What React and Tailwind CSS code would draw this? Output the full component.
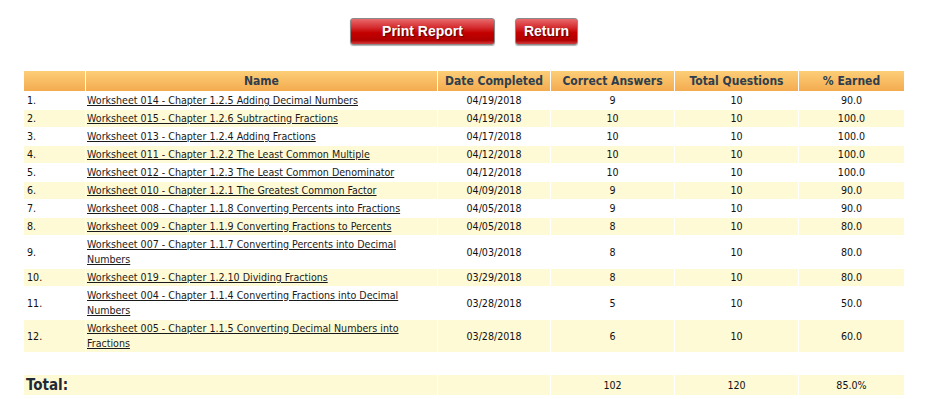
import React from "react";

const rows = [
  ["Worksheet 014 - Chapter 1.2.5 Adding Decimal Numbers", "04/19/2018", "9", "10", "90.0"],
  ["Worksheet 015 - Chapter 1.2.6 Subtracting Fractions", "04/19/2018", "10", "10", "100.0"],
  ["Worksheet 013 - Chapter 1.2.4 Adding Fractions", "04/17/2018", "10", "10", "100.0"],
  ["Worksheet 011 - Chapter 1.2.2 The Least Common Multiple", "04/12/2018", "10", "10", "100.0"],
  ["Worksheet 012 - Chapter 1.2.3 The Least Common Denominator", "04/12/2018", "10", "10", "100.0"],
  ["Worksheet 010 - Chapter 1.2.1 The Greatest Common Factor", "04/09/2018", "9", "10", "90.0"],
  ["Worksheet 008 - Chapter 1.1.8 Converting Percents into Fractions", "04/05/2018", "9", "10", "90.0"],
  ["Worksheet 009 - Chapter 1.1.9 Converting Fractions to Percents", "04/05/2018", "8", "10", "80.0"],
  ["Worksheet 007 - Chapter 1.1.7 Converting Percents into Decimal Numbers", "04/03/2018", "8", "10", "80.0"],
  ["Worksheet 019 - Chapter 1.2.10 Dividing Fractions", "03/29/2018", "8", "10", "80.0"],
  ["Worksheet 004 - Chapter 1.1.4 Converting Fractions into Decimal Numbers", "03/28/2018", "5", "10", "50.0"],
  ["Worksheet 005 - Chapter 1.1.5 Converting Decimal Numbers into Fractions", "03/28/2018", "6", "10", "60.0"],
];

function RedButton({ children, w }) {
  return (
    <button
      className={`h-[27px] ${w} rounded-[3px] border border-[#8a8a8a] bg-[linear-gradient(to_bottom,#e86a6c_0%,#d42a2d_35%,#c40000_55%,#b00000_85%,#d63c3c_100%)] text-[14px] font-bold text-white [text-shadow:1px_1px_1px_#5a0000] shadow-[0_1px_1px_rgba(0,0,0,0.3)]`}
      style={{ fontFamily: '"Liberation Sans", Arial, sans-serif' }}
    >
      {children}
    </button>
  );
}

export default function App() {
  const th = "bg-[linear-gradient(to_bottom,#fcce78,#f4ab4f)] text-[#2f3e4e] font-bold text-[12px] leading-[16px] py-[2px] text-center";
  return (
    <div
      className="w-[925px] h-[399px] bg-white text-[#111] overflow-hidden"
      style={{ fontFamily: '"DejaVu Sans Condensed", "DejaVu Sans", sans-serif' }}
    >
      <div className="ml-[23px] w-[882px] pt-[18px]">
        <div className="flex justify-center gap-[20px]">
          <RedButton w="w-[145px]">Print Report</RedButton>
          <RedButton w="w-[63px]">Return</RedButton>
        </div>
        <table className="mt-[25px] w-[882px] table-fixed border-separate border-spacing-[1px] text-[10.6px] leading-[15px]">
          <colgroup>
            <col className="w-[61px]" />
            <col className="w-[351px]" />
            <col className="w-[112px]" />
            <col className="w-[123px]" />
            <col className="w-[123px]" />
            <col className="w-[105px]" />
          </colgroup>
          <thead>
            <tr>
              <th className={th}></th>
              <th className={th}>Name</th>
              <th className={th}>Date Completed</th>
              <th className={th}>Correct Answers</th>
              <th className={th}>Total Questions</th>
              <th className={th}>% Earned</th>
            </tr>
          </thead>
          <tbody>
            {rows.map((r, i) => (
              <tr key={i} className={i % 2 === 1 ? "bg-[#fffad6]" : "bg-white"}>
                <td className="py-[1px] pl-[3px] align-middle">{i + 1}.</td>
                <td className="py-[1px] pl-[1px] pr-[2px] align-middle">
                  <a href="#" className="underline text-[#1a1a1a]">{r[0]}</a>
                </td>
                <td className="py-[1px] text-center align-middle">{r[1]}</td>
                <td className="py-[1px] text-center align-middle">{r[2]}</td>
                <td className="py-[1px] text-center align-middle">{r[3]}</td>
                <td className="py-[1px] text-center align-middle">{r[4]}</td>
              </tr>
            ))}
            <tr>
              <td colSpan={6} className="h-[21px]"></td>
            </tr>
            <tr className="bg-[#fffad6]">
              <td colSpan={2} className="h-[20px] pl-[2px] text-[15px] font-bold text-[#1f2a36] align-middle">Total:</td>
              <td></td>
              <td className="text-center align-middle">102</td>
              <td className="text-center align-middle">120</td>
              <td className="text-center align-middle">85.0%</td>
            </tr>
          </tbody>
        </table>
      </div>
    </div>
  );
}
